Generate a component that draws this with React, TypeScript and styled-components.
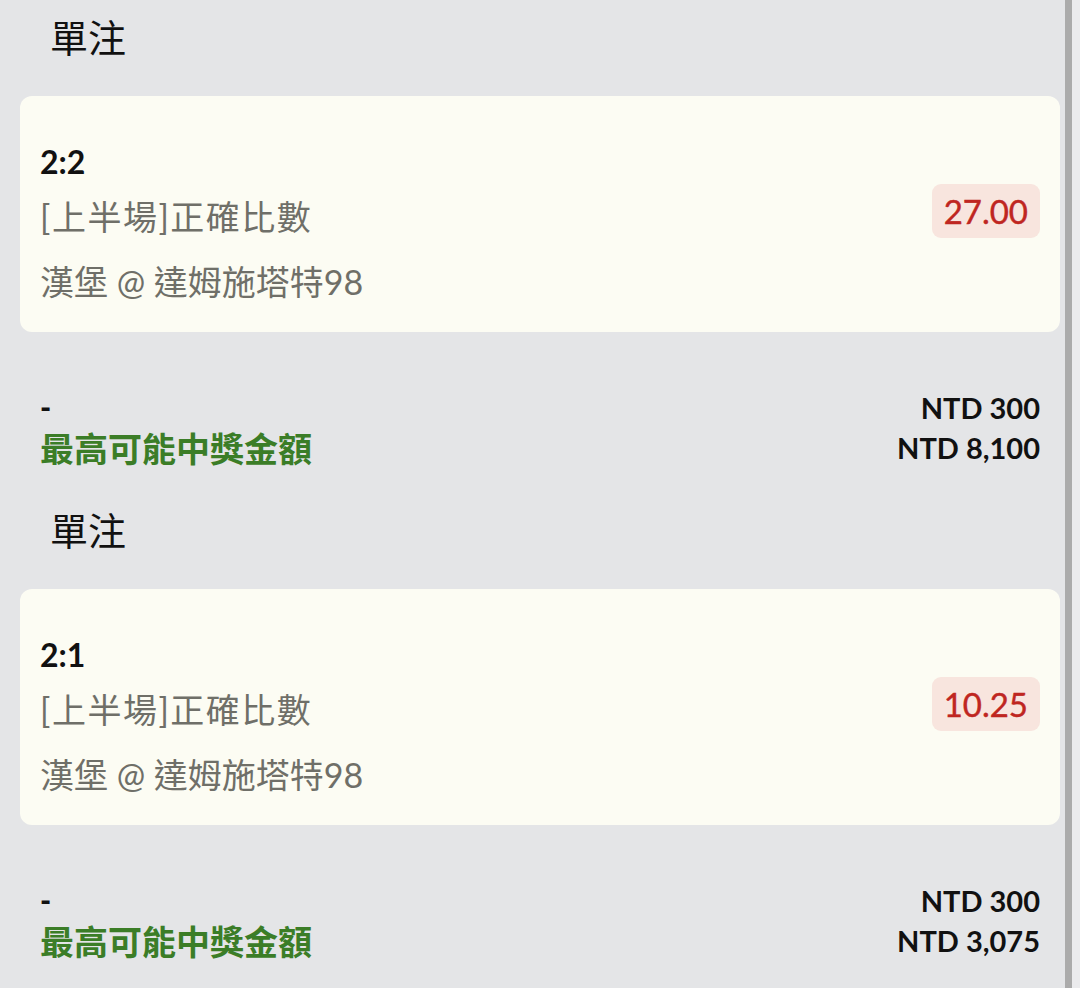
import styled, { createGlobalStyle } from "styled-components"

const GlobalStyle = createGlobalStyle`
  html, body {
    margin: 0;
    padding: 0;
    background: #e4e5e7;
  }
  body {
    font-family: Lato, "Noto Sans CJK TC", sans-serif;
    color: #111;
  }
`

const Page = styled.div`
  display: flex;
  width: 1080px;
  height: 988px;
  overflow: hidden;
  background: #e4e5e7;
`

const Main = styled.div`
  flex: 1;
  padding: 0 5px 0 20px;
`

const ScrollTrack = styled.div`
  width: 15px;
  display: flex;
  background: #ebebed;
`

const ScrollThumb = styled.div`
  width: 7px;
  background: #ababab;
`

const Section = styled.section`
  margin-bottom: 26px;
`

const SectionTitle = styled.h2`
  margin: 0;
  padding-left: 30px;
  font-size: 38px;
  font-weight: 400;
  line-height: 74px;
  color: #111;
`

const Card = styled.div`
  margin-top: 22px;
  height: 236px;
  box-sizing: border-box;
  padding: 43px 20px 0 20px;
  background: #fcfcf3;
  border-radius: 12px;
  display: flex;
  justify-content: space-between;
  align-items: flex-start;
`

const Info = styled.div`
  display: flex;
  flex-direction: column;
`

const Score = styled.div`
  font-size: 32px;
  font-weight: 700;
  line-height: 45px;
  color: #111;
`

const Detail = styled.div`
  font-size: 34px;
  line-height: 65px;
  color: #6f6f68;
`

const Market = styled(Detail)`
  letter-spacing: 1.5px;
`

const Odds = styled.div`
  align-self: center;
  margin-top: -50px;
  padding: 0 12px;
  height: 54px;
  display: flex;
  align-items: center;
  background: #f8e5de;
  border-radius: 9px;
  font-size: 33px;
  color: #bf2621;
  -webkit-text-stroke: 0.4px #bf2621;
`

const Footer = styled.div`
  margin-top: 55px;
  padding: 0 20px;
`

const FooterRow = styled.div`
  display: flex;
  justify-content: space-between;
  align-items: center;
  height: 40px;
`

const Dash = styled.span`
  font-size: 30px;
  font-weight: 900;
`

const PrizeLabel = styled.span`
  font-size: 34px;
  font-weight: 700;
  color: #3b7d27;
`

const Amount = styled.span`
  font-size: 29px;
  font-weight: 700;
  color: #111;
`

type Bet = {
  score: string
  odds: string
  stake: string
  prize: string
}

const bets: Bet[] = [
  { score: "2:2", odds: "27.00", stake: "NTD 300", prize: "NTD 8,100" },
  { score: "2:1", odds: "10.25", stake: "NTD 300", prize: "NTD 3,075" },
]

export default function App() {
  return (
    <>
      <GlobalStyle />
      <Page>
        <Main>
          {bets.map((b) => (
            <Section key={b.score}>
              <SectionTitle>單注</SectionTitle>
              <Card>
                <Info>
                  <Score>{b.score}</Score>
                  <Market>[上半場]正確比數</Market>
                  <Detail>漢堡 @ 達姆施塔特98</Detail>
                </Info>
                <Odds>{b.odds}</Odds>
              </Card>
              <Footer>
                <FooterRow>
                  <Dash>-</Dash>
                  <Amount>{b.stake}</Amount>
                </FooterRow>
                <FooterRow>
                  <PrizeLabel>最高可能中獎金額</PrizeLabel>
                  <Amount>{b.prize}</Amount>
                </FooterRow>
              </Footer>
            </Section>
          ))}
        </Main>
        <ScrollTrack>
          <ScrollThumb />
        </ScrollTrack>
      </Page>
    </>
  )
}
